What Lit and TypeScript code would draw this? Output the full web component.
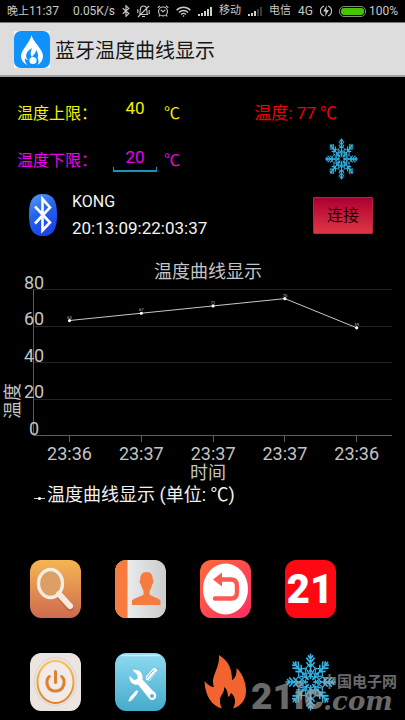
import { LitElement, html, svg, css } from "lit";
import { customElement } from "lit/decorators.js";

const snowflake = (cls: string) => html`
  <svg class=${cls} viewBox="-50 -50 100 100" preserveAspectRatio="none" aria-hidden="true">
    ${[0, 45, 90, 135, 180, 225, 270, 315].map(
      (a) => svg`
        <g transform="rotate(${a})" fill="none" stroke="#35b4e6" stroke-width="3">
          <path d="M0 -5V-49M-5 -46L0 -40L5 -46M-8 -42L0 -33L8 -42M-8 -34L0 -25L8 -34"/>
          <path stroke-width="2.2" d="M0 -10L-9 -24L0 -32L9 -24ZM-6 -14L0 -22L6 -14"/>
        </g>`
    )}
    <circle r="10" fill="none" stroke="#35b4e6" stroke-width="2"/>
    <circle r="16" fill="none" stroke="#2390bd" stroke-width="2"/>
  </svg>`;

@customElement("status-bar")
class StatusBar extends LitElement {
  static styles = css`
    :host {
      display: flex;
      align-items: center;
      gap: 7px;
      height: 22px;
      padding: 0 7px;
      background: #000;
      color: #c8c8c8;
      font-size: 12px;
      line-height: 22px;
      white-space: nowrap;
    }
    svg { display: block; flex: none; }
    .speed { margin-left: auto; }
    .han { font-size: 11px; }
    .power { display: flex; align-items: center; gap: 3px; }
  `;

  signal(level: number) {
    return html`<svg width="14" height="10" viewBox="0 0 14 10" aria-hidden="true">
      ${[2, 3, 5, 7, 9].map(
        (h, i) => svg`<rect x=${i * 3} y=${10 - h} width="2" height=${h} fill=${i < level ? "#d0d0d0" : "#3a3a3a"} />`
      )}
    </svg>`;
  }

  render() {
    return html`
      <span><span class="han">晚上</span>11:37</span>
      <span class="speed">0.05K/s</span>
      <svg width="8" height="12" viewBox="0 0 8 12" fill="none" stroke="#c8c8c8" stroke-width="1.2">
        <path d="M.7 3.3L6.8 8.6L4 11.2V.8L6.8 3.4L.7 8.7"/>
      </svg>
      <svg width="13" height="13" viewBox="0 0 13 13" fill="none" stroke="#c8c8c8" stroke-width="1.1">
        <path d="M2.5 9.5H10.5C9.5 8 10.2 5.5 9.5 4A3 3 0 0 0 3.5 4C2.8 5.5 3.5 8 2.5 9.5M5 11.5H8M1 12L12 1M.8 4V8M12.2 5V9"/>
      </svg>
      <svg width="12" height="12" viewBox="0 0 13 13" fill="none" stroke="#c8c8c8" stroke-width="1.2">
        <circle cx="6.5" cy="7" r="4.8"/>
        <path d="M4 5.2L6.5 7.3L9 5.2M.8 3L3.3 1M9.7 1L12.2 3M3 11L2 12.5M10 11L11 12.5"/>
      </svg>
      <svg width="15" height="11" viewBox="0 0 15 11" fill="none" stroke="#c8c8c8" stroke-width="1.4">
        <path d="M.6 4.2C4.5 .2 10.5 .2 14.4 4.2M2.9 6.4C5.5 3.8 9.5 3.8 12.1 6.4M5.1 8.5C6.5 7.2 8.5 7.2 9.9 8.5"/>
        <circle cx="7.5" cy="10" r=".8" fill="#c8c8c8" stroke="none"/>
      </svg>
      ${this.signal(5)}
      <span class="han">移动</span>
      ${this.signal(3)}
      <span class="han">电信</span>
      <span>4G</span>
      <svg width="12" height="12" viewBox="0 0 12 12" fill="none" stroke="#c8c8c8" stroke-width="1.1">
        <path d="M4 1A5.3 5.3 0 0 0 4 11M8 1A5.3 5.3 0 0 1 8 11"/>
        <path d="M6.8 .5L3.2 6.6H5.6L5 11.5L8.9 5H6.4Z" fill="#c8c8c8" stroke="none"/>
      </svg>
      <span class="power">
        <svg width="27" height="11" viewBox="0 0 27 11">
          <rect x=".5" y=".5" width="26" height="10" rx="4.5" fill="#000" stroke="#8a8a8a"/>
          <rect x="2" y="2" width="23" height="7" rx="3" fill="#46c400"/>
        </svg>
        <span>100%</span>
      </span>
    `;
  }
}

@customElement("limit-form")
class LimitForm extends LitElement {
  static styles = css`
    :host { display: block; padding: 11px 0 0 17px; font-size: 16px; }
    .row { display: flex; align-items: center; height: 47px; }
    .high { color: #f2f200; }
    .low { color: #f000f0; }
    label { width: 96px; flex: none; white-space: nowrap; }
    input {
      box-sizing: border-box;
      width: 44px;
      height: 27px;
      margin: 0 7px 0 0;
      padding: 0 0 8px;
      border: 0;
      outline: 0;
      background: transparent;
      color: inherit;
      font: inherit;
      font-size: 17px;
      line-height: 19px;
      text-align: center;
    }
    .active {
      padding-bottom: 4px;
      background:
        linear-gradient(#1593bd, #1593bd) bottom / 100% 2px no-repeat,
        linear-gradient(#1593bd, #1593bd) left bottom / 1px 5px no-repeat,
        linear-gradient(#1593bd, #1593bd) right bottom / 1px 5px no-repeat;
    }
    .current { margin: 0 68px 0 auto; color: #f00000; font-size: 17px; white-space: nowrap; }
    .flake { width: 33px; height: 42px; margin: 0 47px 0 auto; }
  `;

  render() {
    return html`
      <div class="row">
        <label class="high" for="high">温度上限：</label>
        <input class="high" id="high" value="40" inputmode="numeric" />
        <span class="high">℃</span>
        <output class="current">温度: 77 ℃</output>
      </div>
      <div class="row">
        <label class="low" for="low">温度下限：</label>
        <input class="low active" id="low" value="20" inputmode="numeric" />
        <span class="low">℃</span>
        ${snowflake("flake")}
      </div>
    `;
  }
}

@customElement("device-row")
class DeviceRow extends LitElement {
  static styles = css`
    :host {
      display: flex;
      align-items: center;
      padding: 6px 32px 0 29px;
      color: #f4f4f4;
      font-size: 16px;
      line-height: 27px;
    }
    .bt { flex: none; margin-right: 15px; }
    p { margin: 0; }
    .address { font-size: 17px; }
    button {
      width: 60px;
      height: 37px;
      margin-left: auto;
      padding: 0;
      border: 1px solid #b82544;
      border-radius: 1px;
      background: linear-gradient(#ad0032, #e03545);
      color: #18060b;
      font: inherit;
    }
  `;

  render() {
    return html`
      <svg class="bt" width="28" height="42" viewBox="0 0 28 42" aria-hidden="true">
        <defs>
          <linearGradient id="blue" x1="0" y1="0" x2="0.4" y2="1">
            <stop offset="0" stop-color="#5a9df5"/>
            <stop offset=".5" stop-color="#2565ec"/>
            <stop offset="1" stop-color="#1b45e8"/>
          </linearGradient>
        </defs>
        <path d="M14 0C23 0 28 5 28 21S23 42 14 42S0 37 0 21S5 0 14 0Z" fill="url(#blue)"/>
        <path d="M6 12.5L21 28.5L13.5 36.5V5L21 13.5L6 29.5" fill="none" stroke="#fff" stroke-width="2.6"/>
      </svg>
      <div>
        <p>KONG</p>
        <p class="address">20:13:09:22:03:37</p>
      </div>
      <button type="button">连接</button>
    `;
  }
}

@customElement("temperature-chart")
class TemperatureChart extends LitElement {
  static styles = css`
    :host { display: block; }
    svg { display: block; width: 100%; height: auto; }
    text { font-size: 18px; fill: #c4c4c4; text-anchor: middle; }
    .value { font-size: 4px; }
    .legend { fill: #f2f2f2; text-anchor: start; }
    .grid { fill: none; stroke: #242424; }
    .axis { fill: none; stroke: #5c5c5c; }
    .line { fill: none; stroke: #c8c8c8; }
    .dot { fill: #fff; }
  `;

  points = [
    { time: "23:36", value: 63 },
    { time: "23:37", value: 67 },
    { time: "23:37", value: 71 },
    { time: "23:37", value: 75 },
    { time: "23:36", value: 59 },
  ];

  x = (i: number) => 69.5 + i * 71.8;
  y = (v: number) => 193.5 - v * 1.825;

  render() {
    return html`
      <svg viewBox="0 0 405 273" role="img" aria-label="温度曲线显示">
        <text x="208" y="36">温度曲线显示</text>
        ${[20, 40, 60, 80].map((v) => svg`<path class="grid" d="M33 ${Math.floor(this.y(v)) + 0.5}H392"/>`)}
        <path class="axis" d="M33.5 47V193.5H392"/>
        ${[0, 20, 40, 60, 80].map((v) => svg`<text x="34" y=${Math.round(this.y(v)) - 1}>${v}</text>`)}
        <polyline class="line" points=${this.points.map((p, i) => `${this.x(i)},${this.y(p.value)}`).join(" ")}/>
        ${this.points.map(
          (p, i) => svg`
            <path class="axis" d="M${Math.floor(this.x(i)) + 0.5} 194V200"/>
            <circle class="dot" cx=${this.x(i)} cy=${this.y(p.value)} r="1.6"/>
            <text class="value" x=${this.x(i)} y=${this.y(p.value) - 2}>${p.value}</text>
            <text x=${this.x(i)} y="218">${p.time}</text>`
        )}
        <text x="208" y="237">时间</text>
        <text transform="translate(19 159) rotate(-90)">温度</text>
        <path class="line" d="M34 256.5H45"/>
        <circle class="dot" cx="39.5" cy="256.5" r="1.6"/>
        <text class="legend" x="47" y="259">温度曲线显示 (单位: ℃)</text>
      </svg>
    `;
  }
}

@customElement("app-menu")
class AppMenu extends LitElement {
  static styles = css`
    :host {
      display: grid;
      grid-template-columns: repeat(4, 1fr);
      gap: 35px 0;
      justify-items: center;
      padding: 45px 52px 9px 13px;
    }
    button { width: 51px; height: 58px; padding: 0; border: 0; background: none; }
    svg { display: block; width: 51px; height: 58px; }
    .number {
      font: 900 40px Roboto, sans-serif;
      fill: #fff;
      text-anchor: middle;
    }
  `;

  icons = [
    {
      label: "搜索",
      art: svg`
        <defs><linearGradient id="a" x2="0" y2="1"><stop stop-color="#f5b653"/><stop offset="1" stop-color="#ce6a50"/></linearGradient></defs>
        <rect width="51" height="58" rx="11" ry="12" fill="url(#a)"/>
        <path d="M29 33L40 46" stroke="#a95c3b" stroke-opacity=".5" stroke-width="7" stroke-linecap="round" transform="translate(0 2)"/>
        <ellipse cx="20.5" cy="23.5" rx="12" ry="14" fill="#dca066" stroke="#f4ece2" stroke-width="3.4"/>
        <path d="M29 34L40 46" stroke="#f6eadd" stroke-width="6" stroke-linecap="round"/>`,
    },
    {
      label: "联系人",
      art: svg`
        <defs>
          <linearGradient id="a"><stop stop-color="#f3f4f4"/><stop offset="1" stop-color="#cbccce"/></linearGradient>
          <clipPath id="c"><rect width="51" height="58" rx="11" ry="12"/></clipPath>
        </defs>
        <g clip-path="url(#c)">
          <rect width="51" height="58" fill="url(#a)"/>
          <rect width="12.5" height="58" fill="#f57b3e"/>
        </g>
        <path d="M31.5 12C27 12 25 15.5 25.4 19.5C24 20.5 24.6 23.5 26 24.8C26.6 28 28 29.5 28.6 31V34.5C25 37.5 17.5 38 17 41V45H45.5V41C45 38 38 37.5 34.6 34.5V31C35.5 29.5 36.6 28 37 24.8C38.5 23.5 39 20.5 37.8 19.5C38 15.5 36 12 31.5 12Z" fill="#f57b3e"/>`,
    },
    {
      label: "返回",
      art: svg`
        <defs><linearGradient id="a" x2="1" y2="1"><stop stop-color="#ff6a3a"/><stop offset="1" stop-color="#ff2c62"/></linearGradient></defs>
        <rect width="51" height="58" rx="11" ry="12" fill="url(#a)"/>
        <ellipse cx="25.5" cy="29" rx="22.5" ry="25.5" fill="#fff"/>
        <path d="M20 19.5H31Q37 19.5 37 26V32Q37 38.5 31 38.5H15" fill="none" stroke="#fb5a52" stroke-width="4.4" stroke-linecap="round"/>
        <path d="M13 19.5L22 12.5V26.5Z" fill="#fb5a52"/>`,
    },
    {
      label: "21",
      art: svg`
        <rect width="51" height="58" rx="11" ry="12" fill="#ff0814"/>
        <text class="number" x="25" y="43">21</text>`,
    },
    {
      label: "电源",
      art: svg`
        <defs><linearGradient id="a" x2="0" y2="1"><stop stop-color="#f6c45e"/><stop offset="1" stop-color="#dd8422"/></linearGradient></defs>
        <rect width="51" height="58" rx="11" ry="12" fill="#ece4df"/>
        <ellipse cx="25.5" cy="28.5" rx="21" ry="24" fill="none" stroke="#d9d4d1"/>
        <ellipse cx="25.5" cy="29" rx="18" ry="21" fill="#f1eae7" stroke="url(#a)" stroke-width="2"/>
        <path d="M25.5 18.5V29.5" stroke="#df8137" stroke-width="3" stroke-linecap="round"/>
        <path d="M19.3 23.5C15 27.5 16.5 38 25.5 38S36 27.5 31.7 23.5" fill="none" stroke="#dd8030" stroke-width="3" stroke-linecap="round"/>`,
    },
    {
      label: "设置",
      art: svg`
        <defs><linearGradient id="a" x2="0" y2="1"><stop stop-color="#8fdaf0"/><stop offset="1" stop-color="#45abcb"/></linearGradient></defs>
        <rect width="51" height="58" rx="11" ry="12" fill="url(#a)"/>
        <path d="M7 2.5H44" stroke="#c4effa" stroke-width="1.5" stroke-linecap="round"/>
        <path d="M22 38L17.5 43L14.5 48M31.5 27L34 24" stroke="#fff" stroke-width="2"/>
        <path d="M23 37L15.5 43.5L13 48.5L17 47L22 41Z" fill="#fff"/>
        <path d="M30.5 24L38 15.5Q41 14 42.5 18L34.5 28Z" fill="#fff"/>
        <path d="M32 25L39 16.5M34 27L41.5 18.5" stroke="#62bfd9" stroke-width="1"/>
        <path d="M17.5 17L22.5 22V26L19 27L14.5 23C14 29 18 32.5 23 31.5L33 44C35 48 40 48 41 44C42 40 39 38.5 37.5 37.5L27.5 26.5C28.5 20 24 15.5 17.5 17Z" fill="#fff"/>
        <circle cx="37" cy="43" r="2" fill="#55b5d2"/>`,
    },
    {
      label: "加热",
      art: svg`
        <path d="M19 2C30 9 32 18 32 27C35 26 37 21 36.500 15C42 20 46 29 46 38C46 47 41 53 33 55.500C36 50 36 44 31 40C30 42 29.500 43 28 44C28 40 27 36 24 34C25 41 19 42 20 49C20.300 52 21 54 22 55.500C12 53 5 43 4.500 28C8 32 11 34 14 34C10 23 20 16 19 2Z" fill="#f2642f"/>`,
    },
    { label: "制冷", art: null },
  ];

  render() {
    return this.icons.map(
      ({ label, art }) => html`
        <button type="button" aria-label=${label}>
          ${art ? html`<menu-art .art=${art}></menu-art>` : snowflake("flake")}
        </button>`
    );
  }
}

/* Each drawing has its own shadow root, so gradient ids stay local. */
@customElement("menu-art")
class MenuArt extends LitElement {
  static properties = { art: { attribute: false } };
  static styles = [AppMenu.styles, css`:host { display: block; padding: 0; }`];
  declare art: unknown;
  render() {
    return html`<svg viewBox="0 0 51 58" aria-hidden="true">${this.art}</svg>`;
  }
}

@customElement("app-root")
class AppRoot extends LitElement {
  static styles = css`
    :host {
      display: block;
      position: relative;
      min-height: 100vh;
      background: #000;
      font-family: Roboto, "Noto Sans CJK SC", sans-serif;
    }
    header {
      display: flex;
      align-items: center;
      gap: 5px;
      box-sizing: border-box;
      height: 55px;
      padding-left: 14px;
      border-top: 1px solid #777;
      border-bottom: 2px solid #a0a0a0;
      background: #ddd;
    }
    h1 { margin: 0; padding-top: 4px; color: #161616; font-size: 20px; font-weight: 400; line-height: 28px; }
    .watermark {
      position: absolute;
      right: 7px;
      bottom: 4px;
      width: 147px;
      height: 42px;
      overflow: visible;
      opacity: 0.65;
      pointer-events: none;
    }
    .watermark text { fill: #a2a2a2; }
    .site { font: 900 37px Roboto, sans-serif; }
    .name { font: bold 15px "Noto Sans CJK SC", sans-serif; }
    .com { font: italic bold 26px "DejaVu Serif", serif; }
  `;

  render() {
    return html`
      <status-bar></status-bar>
      <header>
        <svg width="36" height="37" viewBox="0 0 36 37" aria-hidden="true">
          <rect width="36" height="37" fill="#f4f4f4"/>
          <rect width="36" height="37" rx="7" fill="#0f92fb"/>
          <path d="M17.500 4C19 11 29 18 29 25C29 29 27 32 23.500 34C25 31 25 29 23.500 27C25 24 23.500 21 22 19C22 22 20 23 18 26C16 24 16.500 21 18 17C13 20 10 25 14 29C12.500 29 11.500 28 11 27C10.500 30 11.500 32 13.500 34C9 32 7 29 7 25C7 19 16 12 17.500 4Z" fill="#fff"/>
          <circle cx="19" cy="29.500" r="3.600" fill="#fff"/>
        </svg>
        <h1>蓝牙温度曲线显示</h1>
      </header>
      <limit-form></limit-form>
      <device-row></device-row>
      <temperature-chart></temperature-chart>
      <app-menu></app-menu>
      <svg class="watermark" viewBox="0 0 147 42" aria-hidden="true">
        <text class="site" x="0" y="35">21ic</text>
        <text class="name" x="71" y="13">中国电子网</text>
        <text class="com" x="72" y="36">.com</text>
      </svg>
    `;
  }
}
